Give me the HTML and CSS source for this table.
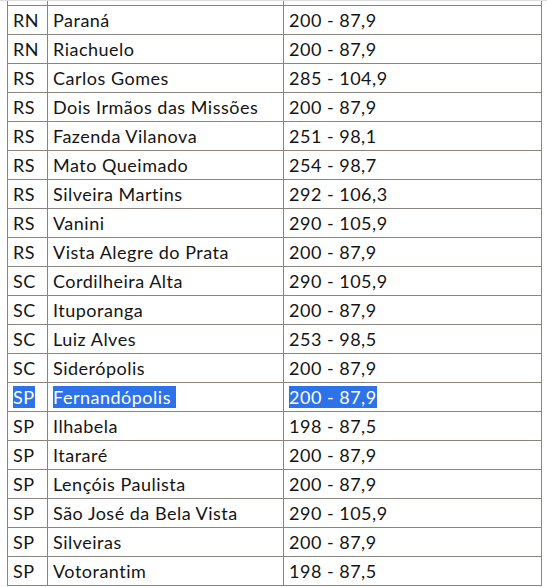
FILE: index.html
```html
<!DOCTYPE html>
<html>
<head>
<meta charset="utf-8">
<link rel="stylesheet" href="styles.css">
</head>
<body>
<div class="viewport">
<table class="cities">
<colgroup><col class="c-uf"><col class="c-name"><col class="c-val"></colgroup>
<tbody>
<tr><td>RN</td><td>Upanema</td><td>200 - 87,9</td></tr>
<tr><td>RN</td><td>Paraná</td><td>200 - 87,9</td></tr>
<tr><td>RN</td><td>Riachuelo</td><td>200 - 87,9</td></tr>
<tr><td>RS</td><td>Carlos Gomes</td><td>285 - 104,9</td></tr>
<tr><td>RS</td><td>Dois Irmãos das Missões</td><td>200 - 87,9</td></tr>
<tr><td>RS</td><td>Fazenda Vilanova</td><td>251 - 98,1</td></tr>
<tr><td>RS</td><td>Mato Queimado</td><td>254 - 98,7</td></tr>
<tr><td>RS</td><td>Silveira Martins</td><td>292 - 106,3</td></tr>
<tr><td>RS</td><td>Vanini</td><td>290 - 105,9</td></tr>
<tr><td>RS</td><td>Vista Alegre do Prata</td><td>200 - 87,9</td></tr>
<tr><td>SC</td><td>Cordilheira Alta</td><td>290 - 105,9</td></tr>
<tr><td>SC</td><td>Ituporanga</td><td>200 - 87,9</td></tr>
<tr><td>SC</td><td>Luiz Alves</td><td>253 - 98,5</td></tr>
<tr><td>SC</td><td>Siderópolis</td><td>200 - 87,9</td></tr>
<tr><td><span class="sel">SP</span></td><td><span class="sel">Fernandópolis </span></td><td><span class="sel">200 - 87,9</span></td></tr>
<tr><td>SP</td><td>Ilhabela</td><td>198 - 87,5</td></tr>
<tr><td>SP</td><td>Itararé</td><td>200 - 87,9</td></tr>
<tr><td>SP</td><td>Lençóis Paulista</td><td>200 - 87,9</td></tr>
<tr><td>SP</td><td>São José da Bela Vista</td><td>290 - 105,9</td></tr>
<tr><td>SP</td><td>Silveiras</td><td>200 - 87,9</td></tr>
<tr><td>SP</td><td>Votorantim</td><td>198 - 87,5</td></tr>
</tbody>
</table>
</div>
</body>
</html>
```
FILE: styles.css
```css
html, body {
  margin: 0;
  padding: 0;
  background: #fff;
}
.viewport {
  height: 587px;
  overflow: hidden;
  border-top: 1px solid #dcdcdc;
}
.cities {
  margin: -25px 0 0 7px;
  width: 534px;
  border-collapse: collapse;
  table-layout: fixed;
  font-family: Lato, "Open Sans", sans-serif;
  font-size: 18px;
  letter-spacing: 0.5px;
  color: #141414;
}
.c-uf { width: 40px; }
.c-name { width: 236px; }
.c-val { width: 258px; }
.cities td {
  border: 1px solid #8a847e;
  height: 29px;
  padding: 0 5px;
  box-sizing: border-box;
  line-height: 22px;
  white-space: nowrap;
  overflow: hidden;
}
.sel {
  background: #2d72e8;
  color: #fff;
  white-space: pre;
}
```
